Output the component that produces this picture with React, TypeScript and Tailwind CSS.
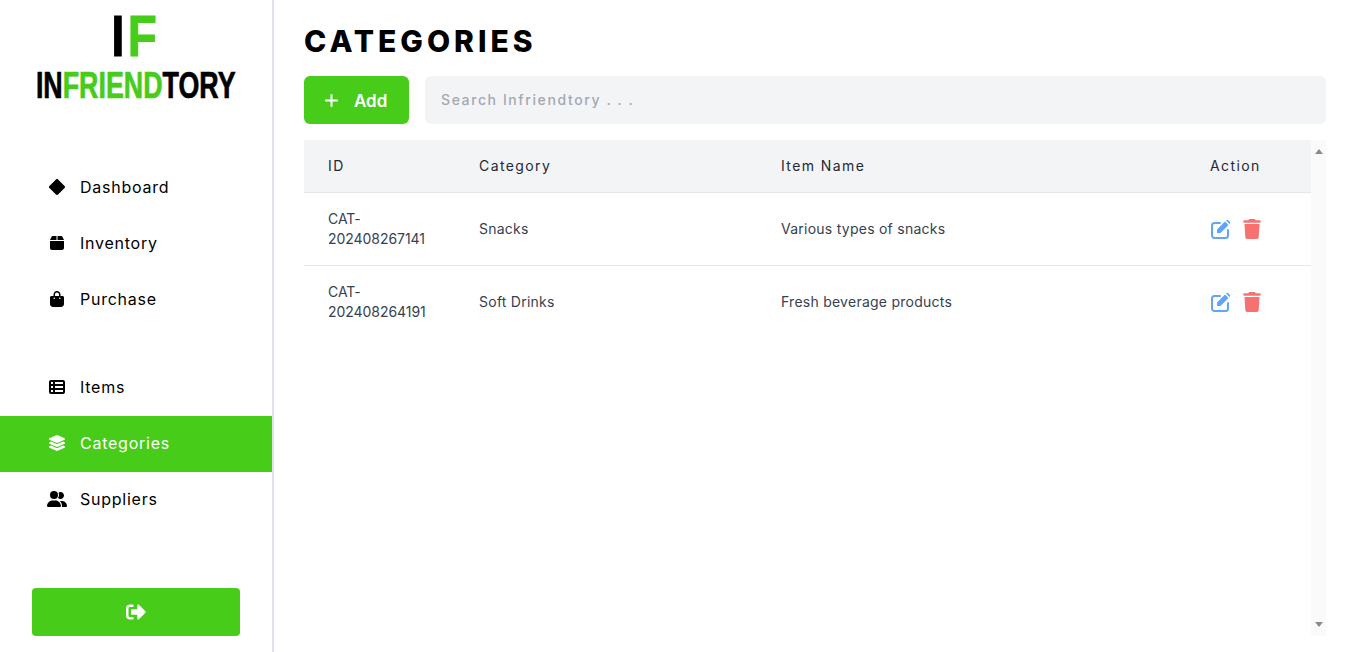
import { FaSignOutAlt } from 'react-icons/fa';
import { FaBox, FaBagShopping, FaLayerGroup, FaTableList, FaTrash, FaUserGroup } from 'react-icons/fa6';
import { BsDiamondFill } from 'react-icons/bs';
import { FiPlus } from 'react-icons/fi';

const topLinks = [
  { label: 'Dashboard', icon: BsDiamondFill, size: 16 },
  { label: 'Inventory', icon: FaBox, size: 16 },
  { label: 'Purchase', icon: FaBagShopping, size: 16 },
];

const bottomLinks = [
  { label: 'Items', icon: FaTableList, size: 16 },
  { label: 'Categories', icon: FaLayerGroup, size: 18, active: true },
  { label: 'Suppliers', icon: FaUserGroup, size: 20 },
];

const rows = [
  { id: 'CAT-202408267141', category: 'Snacks', item: 'Various types of snacks' },
  { id: 'CAT-202408264191', category: 'Soft Drinks', item: 'Fresh beverage products' },
];

const EditIcon = () => (
  <svg width="20" height="20" viewBox="0 0 20 20" className="ml-px text-[#60a5fa]">
    <path d="M9 4H3.5A2.5 2.5 0 0 0 1 6.5v10A2.5 2.5 0 0 0 3.5 19h11a2.5 2.5 0 0 0 2.5-2.5V11" fill="none" stroke="currentColor" strokeWidth="2" strokeLinecap="round" />
    <path d="M6 10.5 14 2.5 17.5 6 9.5 14H6ZM15.2 1.3a1.4 1.4 0 0 1 2-.1l1.6 1.6a1.4 1.4 0 0 1 0 2L18.6 5 15 1.5Z" fill="currentColor" />
  </svg>
);

const NavItem = ({ label, icon: Icon, size, active }: { label: string; icon: React.ElementType; size: number; active?: boolean }) => (
  <a className={`flex h-14 items-center gap-[15px] pb-[2px] pl-12 text-base tracking-[0.75px] ${active ? 'bg-[#48cc1a] text-white' : 'text-black'}`}>
    <span className="flex w-[17px] justify-center">
      <Icon size={size} className="shrink-0" />
    </span>
    {label}
  </a>
);

const App = () => {
  return (
    <div className="flex h-screen overflow-hidden bg-white font-['Inter',sans-serif] text-[#1f2937]">
      <aside className="flex w-[274px] shrink-0 flex-col border-r-2 border-[#dfe1ea] bg-white">
        <div className="flex flex-col items-center pt-[11px] font-['Liberation_Sans',sans-serif] font-bold">
          <div className="flex h-[50px] scale-x-[0.82] items-center text-[58px] leading-none tracking-[4px] [-webkit-text-stroke:1px_currentColor]">
            <span className="text-black">I</span>
            <span className="text-[#48cc1a]">F</span>
          </div>
          <div className="mt-[5px] scale-x-[0.725] whitespace-nowrap text-[37px] leading-[40px] [-webkit-text-stroke:0.7px_currentColor]">
            <span className="text-black">IN</span>
            <span className="text-[#48cc1a]">FRIEND</span>
            <span className="text-black">TORY</span>
          </div>
        </div>

        <nav className="mt-[54px] flex flex-col">
          {topLinks.map((link) => (
            <NavItem key={link.label} {...link} />
          ))}
        </nav>
        <nav className="mt-8 flex flex-col">
          {bottomLinks.map((link) => (
            <NavItem key={link.label} {...link} />
          ))}
        </nav>

        <div className="mt-auto px-8 pb-4">
          <button className="flex h-12 w-[208px] items-center justify-center rounded bg-[#48cc1a] text-white">
            <FaSignOutAlt size={20} />
          </button>
        </div>
      </aside>

      <main className="flex min-w-0 flex-1 flex-col pb-4 pl-[30px] pr-8">
        <h1 className="mt-[21px] h-10 text-[30px] leading-10 font-extrabold tracking-[4px] text-black">CATEGORIES</h1>

        <div className="mt-[15px] flex gap-4">
          <button className="flex h-12 w-[105px] items-center gap-[13px] rounded-md bg-[#48cc1a] pl-[18px] text-[17px] leading-[26px] font-semibold text-white">
            <FiPlus size={19} strokeWidth={2.5} />
            <span className="pt-px">Add</span>
          </button>
          <div className="flex h-12 flex-1 items-center rounded-md bg-[#f3f4f6] px-4 text-sm font-medium tracking-[1.6px] text-[#a3a8b3]">
            Search Infriendtory . . .
          </div>
        </div>

        <div className="mt-4 flex min-h-0 flex-1">
          <div className="flex-1">
            <table className="w-full table-fixed border-collapse text-left text-sm">
              <colgroup>
                <col className="w-[151px]" />
                <col className="w-[302px]" />
                <col />
                <col className="w-[125px]" />
              </colgroup>
              <thead>
                <tr className="h-[52px] border-b border-[#e5e7eb] bg-[#f3f4f6] tracking-[1.4px]">
                  <th className="pl-6 font-normal">ID</th>
                  <th className="pl-6 font-normal">Category</th>
                  <th className="pl-6 font-normal">Item Name</th>
                  <th className="pl-6 font-normal">Action</th>
                </tr>
              </thead>
              <tbody>
                {rows.map((row, i) => (
                  <tr key={row.id} className={`h-[73px] tracking-[0.25px] text-[#374151] ${i < rows.length - 1 ? 'border-b border-[#e5e7eb]' : ''}`}>
                    <td className="pl-6 pr-4 leading-5 tracking-[-0.05px]">{row.id}</td>
                    <td className="pl-6">{row.category}</td>
                    <td className="pl-6">{row.item}</td>
                    <td className="pl-6">
                      <div className="flex items-center gap-3">
                        <EditIcon />
                        <FaTrash size={20} className="-ml-px text-[#f87171]" />
                      </div>
                    </td>
                  </tr>
                ))}
              </tbody>
            </table>
          </div>

          <div className="flex w-[15px] shrink-0 flex-col items-center justify-between bg-[#fafafa] py-[9px] text-[#8a8a8a]">
            <span className="h-0 w-0 border-x-[4.5px] border-b-[5px] border-x-transparent border-b-current" />
            <span className="h-0 w-0 border-x-[4.5px] border-t-[5px] border-x-transparent border-t-current" />
          </div>
        </div>
      </main>
    </div>
  );
};

export default App;
